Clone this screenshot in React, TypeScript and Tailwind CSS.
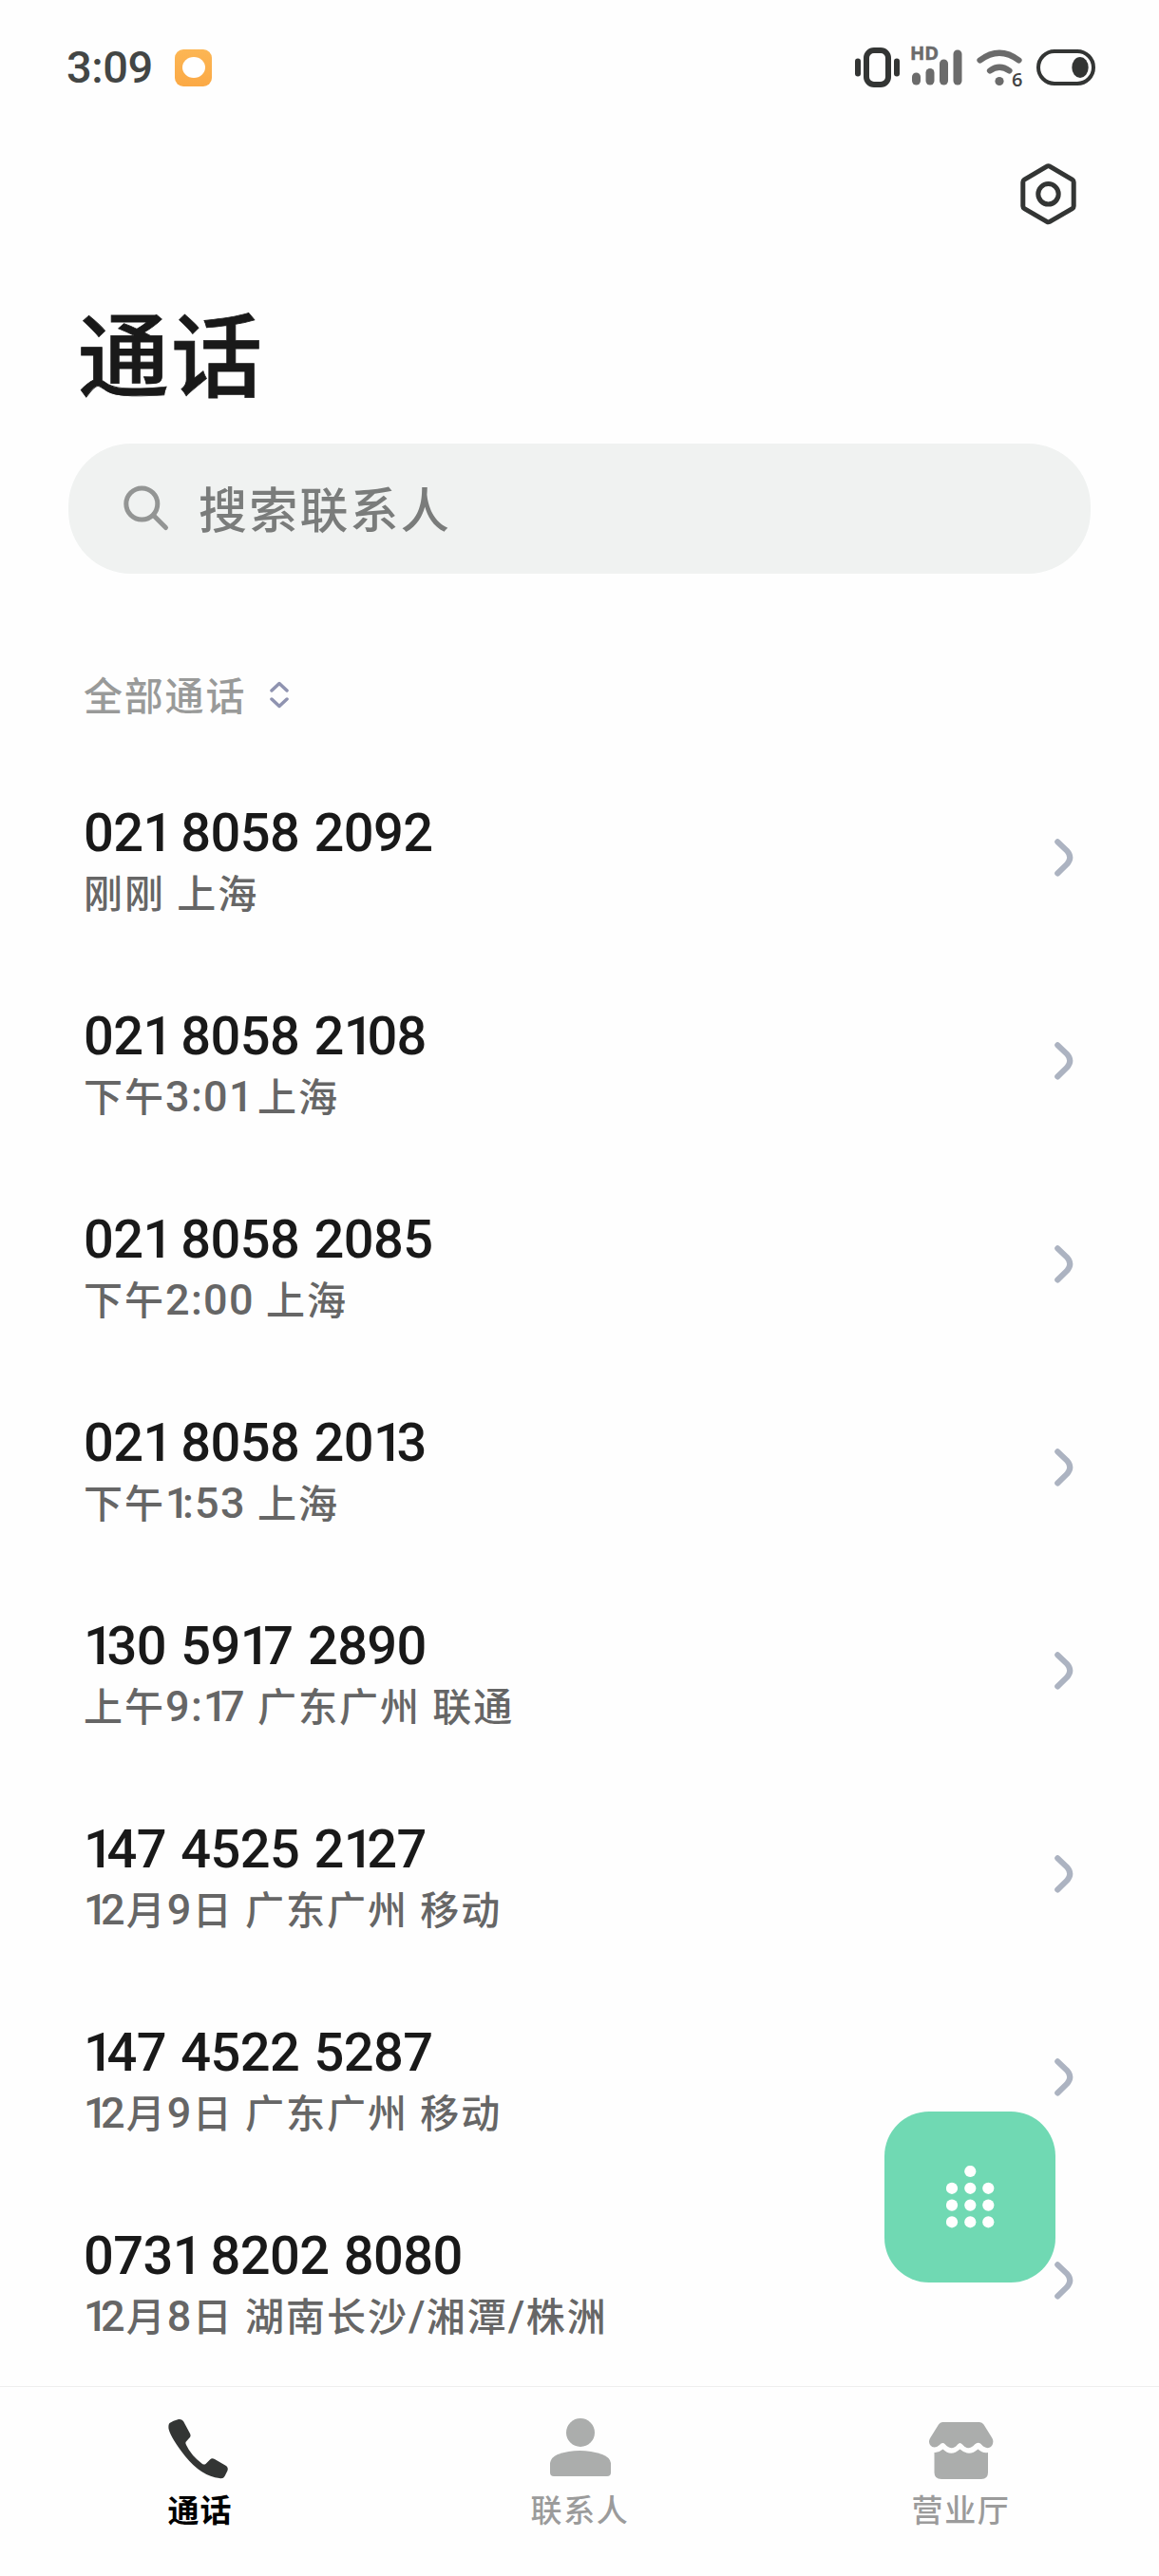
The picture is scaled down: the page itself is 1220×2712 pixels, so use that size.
import React from 'react';

type Call = { number: string; info: string };

const calls: Call[] = [
  { number: '021 8058 2092', info: '刚刚 上海' },
  { number: '021 8058 2108', info: '下午3:01 上海' },
  { number: '021 8058 2085', info: '下午2:00 上海' },
  { number: '021 8058 2013', info: '下午1:53 上海' },
  { number: '130 5917 2890', info: '上午9:17 广东广州 联通' },
  { number: '147 4525 2127', info: '12月9日 广东广州 移动' },
  { number: '147 4522 5287', info: '12月9日 广东广州 移动' },
  { number: '0731 8202 8080', info: '12月8日 湖南长沙/湘潭/株洲' },
];

/* Roboto figures are tabular, so each "1" is tightened to a proportional width. */
function Figures({ text, small }: { text: string; small?: boolean }) {
  return (
    <>
      {text.split(/(1)/).map((part, i) =>
        part === '1' ? (
          <span key={i} className={small ? 'tracking-[-0.170em]' : 'tracking-[-0.130em]'}>
            1
          </span>
        ) : (
          part
        ),
      )}
    </>
  );
}

function Info({ text }: { text: string }) {
  return (
    <>
      {text.split(/([0-9:/]+)/).map((part, i) =>
        /[0-9:/]/.test(part) ? (
          <span key={i} className="font-['Roboto','Noto_Sans_CJK_SC',sans-serif] text-[45px] leading-none tracking-[1.300px]">
            <Figures text={part} small />
          </span>
        ) : (
          part
        ),
      )}
    </>
  );
}

function StatusBar() {
  return (
    <header className="flex h-[142px] items-center justify-between pl-[70px] pr-[67px]">
      <div className="flex items-center">
        <span className="w-[90px] font-['Roboto',sans-serif] text-[47px] font-medium leading-[46px] tracking-[-0.400px] text-[#434645]">3:09</span>
        <span className="ml-[24px] flex size-[39px] items-center justify-center rounded-[9px] bg-linear-to-b from-[#fcb654] to-[#fba945]">
          <span className="h-[22px] w-[24px] rounded-[50%] bg-white" />
        </span>
      </div>
      <div className="flex items-center">
        <svg width="47" height="42" viewBox="0 0 47 42" fill="none">
          <rect x="12" y="3" width="23" height="36" rx="8" stroke="#333534" strokeWidth="6" />
          <rect x="0" y="11.500" width="6" height="19" rx="3" fill="#333534" />
          <rect x="41" y="11.500" width="6" height="19" rx="3" fill="#333534" />
        </svg>
        <div className="relative ml-[12px] h-[42px] w-[54px]">
          <span className="absolute -left-px -top-[4px] font-['Open_Sans',sans-serif] text-[20px] font-bold leading-[20px] text-[#6b6b6b] [-webkit-text-stroke:0.500px_#6b6b6b]">HD</span>
          <svg className="absolute inset-0" width="54" height="42" viewBox="0 0 54 42" fill="#6b6b6b">
            <rect x="1" y="26.500" width="9" height="13" rx="4.500" />
            <rect x="15.500" y="22" width="9" height="17.500" rx="4.500" />
            <rect x="30" y="12.500" width="9" height="27" rx="4.500" />
            <rect x="44.500" y="2.500" width="9" height="37" rx="4.500" />
          </svg>
        </div>
        <div className="relative ml-[15px] h-[42px] w-[48px]">
          <svg width="48" height="42" viewBox="0 0 48 42" fill="none" stroke="#6b6b6b" strokeWidth="6.200" strokeLinecap="round">
            <path d="M3.500 13.500Q24 -2 44.500 13.500" />
            <path d="M14 24.500Q24 17 34.500 24.500" />
            <circle cx="24" cy="35.500" r="4.600" fill="#6b6b6b" stroke="none" />
          </svg>
          <span className="absolute left-[37px] top-[24px] font-['Open_Sans',sans-serif] text-[20px] font-semibold leading-[20px] text-[#444444]">6</span>
        </div>
        <svg className="ml-[15px]" width="62" height="42" viewBox="0 0 62 42" fill="none">
          <rect x="2" y="4" width="58" height="34" rx="17" stroke="#333534" strokeWidth="4" />
          <ellipse cx="46" cy="21" rx="8.700" ry="11" fill="#333534" />
        </svg>
      </div>
    </header>
  );
}

function Chevron() {
  return (
    <svg width="20" height="40" viewBox="0 0 20 40" fill="none" stroke="#acb3c1" strokeWidth="6" strokeLinecap="round">
      <path d="M3.200 3.200L13 12.500Q19.500 19.800 13 27L3.200 36.500" />
    </svg>
  );
}

const dots = [
  [25.3, 6], [6, 23.8], [25.3, 23.8], [44.3, 23.8], [6, 41.6], [25.3, 41.6], [44.3, 41.6], [6, 59.3], [25.3, 59.3], [44.3, 59.3],
];

function Tab({ label, active, children }: { label: string; active?: boolean; children: React.ReactNode }) {
  return (
    <button className="flex flex-1 flex-col items-center pt-[30px]">
      <svg width="72" height="70" viewBox="0 0 72 70" fill={active ? '#333534' : '#abadac'}>
        {children}
      </svg>
      <span
        className={
          active
            ? 'ml-[3px] mt-[8px] text-[33px] font-bold leading-[40px] tracking-[1px] text-black'
            : 'ml-[1px] mt-[8px] text-[33px] leading-[40px] font-medium tracking-[1.600px] text-[#9b9b9b]'
        }
      >
        {label}
      </span>
    </button>
  );
}

export default function App() {
  return (
    <div className="relative flex h-[2712px] w-[1220px] flex-col overflow-hidden bg-[#fefefe] font-['Noto_Sans_CJK_SC',sans-serif]">
      <StatusBar />
      <div className="flex h-[125px] justify-end pr-[83px] pt-[27px]">
        <svg width="66" height="70" viewBox="0 0 66 70" fill="none" stroke="#333534" strokeWidth="5">
          <path d="M31 6.200Q32.500 5.200 34 6.200L57.700 20Q59.200 21 59.200 22.800V48Q59.200 49.800 57.700 50.700L34 64.300Q32.500 65.200 31 64.300L7.300 50.700Q5.800 49.800 5.800 48V22.800Q5.800 21 7.300 20Z" />
          <circle cx="32.500" cy="35.300" r="10.700" />
        </svg>
      </div>

      <h1 className="ml-[82px] mt-[47px] text-[96px] font-medium leading-[110px] tracking-[2px] text-[#191919] [-webkit-text-stroke:0.800px_#191919]">通话</h1>

      <div className="mx-[72px] mt-[43px] flex h-[137px] shrink-0 items-center rounded-[66px] bg-[#f0f2f1] pl-[57px]">
        <svg width="50" height="50" viewBox="0 0 50 50" fill="none" stroke="#939594" strokeWidth="5" strokeLinecap="round">
          <circle cx="20.300" cy="19.500" r="16.500" />
          <path d="M32.500 31.500L45.500 44.500" />
        </svg>
        <span className="-mt-[4px] ml-[30px] text-[51px] font-medium leading-[60px] tracking-[2.200px] text-[#7a7c7b]">搜索联系人</span>
      </div>

      <div className="ml-[88px] mt-[98px] flex h-[60px] shrink-0 items-center">
        <span className="-mt-[4px] text-[41px] font-medium leading-[60px] tracking-[1.800px] text-[#999a99]">全部通话</span>
        <svg className="ml-[25px]" width="20" height="30" viewBox="0 0 20 30" fill="none" stroke="#8f93b0" strokeWidth="3.500" strokeLinecap="round" strokeLinejoin="round">
          <path d="M2 10L10 2.500L18 10M2 19L10 26.500L18 19" />
        </svg>
      </div>

      <ul className="mt-[34px] flex flex-col">
        {calls.map((call) => (
          <li key={call.number} className="flex h-[214px] items-center justify-between pl-[88px] pr-[90px]">
            <div className="flex flex-col pt-[8px]">
              <span className="font-['Roboto',sans-serif] text-[56px] font-medium leading-[54px] tracking-[-0.600px] text-[#191919] [word-spacing:2px]">
                <Figures text={call.number} />
              </span>
              <span className="mt-[7px] h-[54px] text-[41px] font-medium leading-[54px] tracking-[2px] text-[#666666] [word-spacing:1px]">
                <Info text={call.info} />
              </span>
            </div>
            <Chevron />
          </li>
        ))}
      </ul>

      <button className="absolute left-[931px] top-[2223px] flex size-[180px] items-center justify-center rounded-[47px] bg-[#70d9b3]">
        <svg width="51" height="66" viewBox="0 0 51 66" fill="#ffffff">
          {dots.map(([x, y]) => (
            <circle key={`${x}-${y}`} cx={x} cy={y} r="6.100" />
          ))}
        </svg>
      </button>

      <nav className="mt-auto flex h-[200px] shrink-0 border-t border-[#eeeeee] px-[8.500px]">
        <Tab label="通话" active>
          <path d="M5.500 8Q9 5.500 15 4Q18 3.500 20 6L27 19Q28.500 22 26 24L22.500 28Q22 29 23 31Q28 42 40 51Q42 52 43.500 51L48 46.500Q50 44.500 53 46L65 53Q67.500 55 66.500 58L63.500 64Q62 67 58 66Q39 64 22 43Q7 24 4.500 14Q4 9.500 5.500 8Z" />
        </Tab>
        <Tab label="联系人">
          <circle cx="37" cy="18" r="15" />
          <path d="M5 56V50Q6 44 13 41Q36 33 60 41Q68 44 69 50V60Q69 64 65 64H9Q5 64 5 60Z" />
        </Tab>
        <Tab label="营业厅">
          <path d="M17 7H56Q59 7 60.500 9.500L69.500 24Q71.500 28 69 32Q66 36 60 32.500L57 29.500Q54 27.500 51 30.500Q44 38 38 30.500Q35.500 27.500 33 30.500Q27 38 20 30.500Q17 27.500 14 31Q8 36 4 31Q2 27.500 4 24L13 9.500Q14.500 7 17 7Z" />
          <path d="M8.500 39Q13 39.500 17.500 35.500Q26 44 35.500 35.500Q45 44 54.500 35.500Q59 40 65 39V60Q65 67 58 67H16Q8.500 67 8.500 60Z" />
        </Tab>
      </nav>
    </div>
  );
}
